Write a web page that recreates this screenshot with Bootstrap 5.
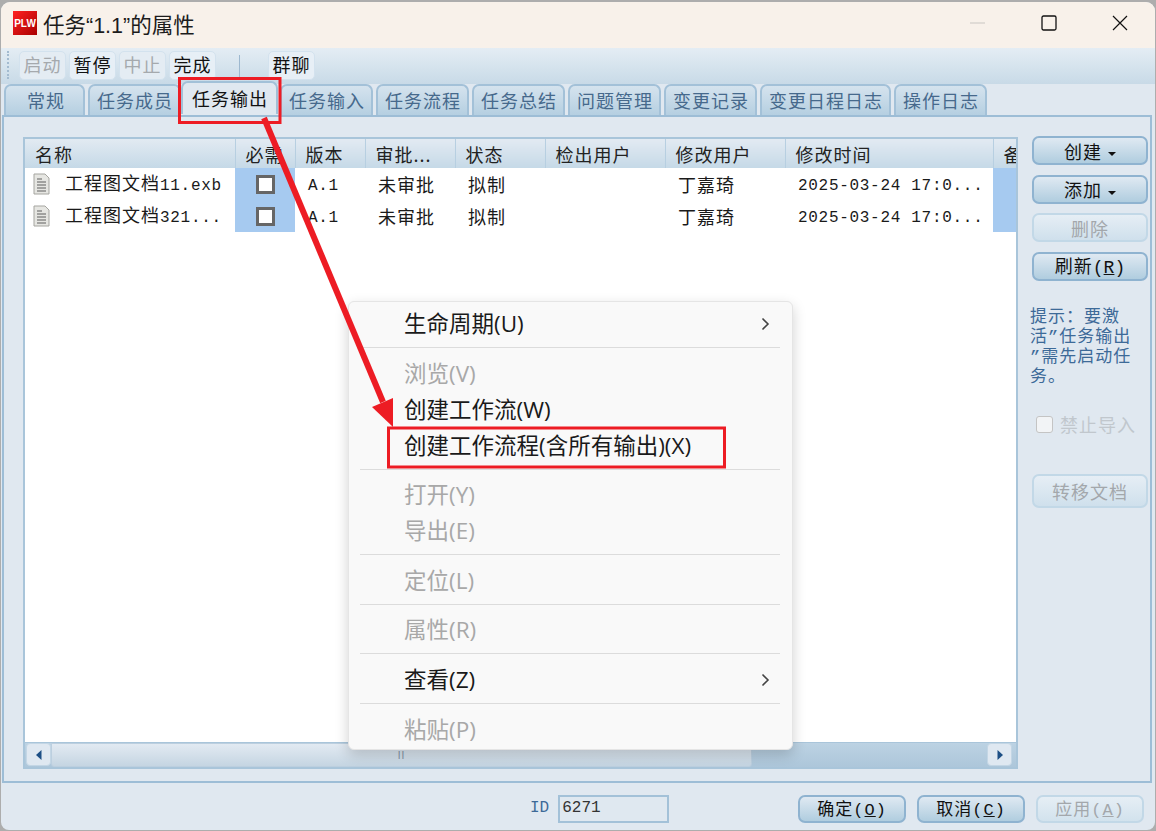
<!DOCTYPE html>
<html lang="zh"><head><meta charset="utf-8"><title>任务属性</title>
<link href="https://cdn.jsdelivr.net/npm/bootstrap@5.3.0/dist/css/bootstrap.min.css" rel="stylesheet">
<style>
:root{--ink:#1c1c1c;--blue:#9dbdd6;--pane:#e0e8f0;--tabtxt:#46698c}
html,body{height:831px;overflow:hidden}
body{background:#adadad;font-family:"Noto Sans CJK SC",sans-serif;color:var(--ink);position:relative}
.win{position:absolute;left:1px;top:2px;width:1154px;height:828px;background:var(--pane);border-radius:9px 9px 8px 8px;overflow:hidden}
.titlebar{height:46px;background:#f8f1ea;padding:0 0 4px 12px;font:21.5px "Liberation Sans","Noto Sans CJK SC",sans-serif}
.logo{width:24px;height:24px;background:linear-gradient(135deg,#f22,#a00);color:#fff;font:bold 10px "Liberation Sans",sans-serif;margin-right:6px}
.wbtn{width:71px;height:42px}
.tools{height:36px;background:linear-gradient(#e4edf4,#c8dae7);padding:3px 0 0 6px}
.grip{width:3px;height:28px;border-left:2px dotted #a3bbd0;margin-right:9px}
.tbtn{width:47px;height:29px;padding:0 0 3px;margin-right:3px;border:1px solid #d3e2ee;border-radius:5px;background:#e7eff6;color:#111;font-size:18px;letter-spacing:1px;line-height:1}
.tbtn:disabled{background:#e4ecf3;color:#a5a9ad;border-color:#d3e2ee;opacity:1}
.tsep{width:1px;height:22px;background:#9db8cf;margin:0 28px 0 20px}
.tabstrip{height:31px;padding-left:3px;border:0;gap:3px;flex-wrap:nowrap;position:relative;z-index:1}
.tabstrip .nav-link{height:31px;margin:0;padding:2px 6px 0 7px;color:var(--tabtxt);font-size:18px;letter-spacing:1px;line-height:24px;white-space:nowrap;border:2px solid #a3c1d8;border-bottom:0;border-radius:7px 7px 0 0;background:linear-gradient(#d5e3ee,#b5cfe1)}
.tabstrip .nav-link.wide{padding:2px 18px 0 21px}
.tabstrip .nav-link.active{color:#111;background:var(--pane);border-color:#a3c1d8;height:33px;margin:-3px -1px -1px -3px;padding:3px 7px 0 9px;width:97px}
.panel{height:668px;margin:0 0 0 1px;border:2px solid var(--blue);width:1150px;background:var(--pane);padding:20px 3px 0 19px;column-gap:14px}
.grid{width:995px;height:632px;border:2px solid #a9c5da;background:#fff;overflow:hidden;flex-shrink:0}
.gridtable{table-layout:fixed;width:993px;margin:0;--bs-table-bg:transparent;border-collapse:collapse}
.c1{width:210px}.c2{width:60px}.c3{width:70px}.c4{width:90px}.c5{width:90px}.c6{width:120px}.c7{width:120px}.c8{width:208px}.c9{width:25px}
.gridtable th{height:29px;padding:0 0 0 10px;font-weight:400;font-size:18px;letter-spacing:1px;line-height:24px;color:#222;background:linear-gradient(#e2eaf2,#c5d9e7);border:0;border-right:1px solid #b7cfe1;white-space:nowrap;overflow:hidden;vertical-align:middle}
.gridtable td{height:32px;padding:0;border:0;font:16px/24px "Liberation Mono","Noto Sans CJK SC",monospace;letter-spacing:.7px;color:#1a1a1a;white-space:nowrap;overflow:hidden;vertical-align:middle}
.cn{font-family:"Noto Sans CJK SC",sans-serif!important;letter-spacing:1px!important;font-size:18px!important;line-height:24px}
.gridtable td.pick{background:#a6caf0}
.namecell{padding-left:8px!important}
.namecell svg{margin-right:15px;vertical-align:-5px}
.chk{display:block;width:19px;height:19px;margin:0 auto;border:3px solid #666;background:#fff}
.ind1{padding-left:13px!important}
.lat{padding-top:3px!important}
.gridfill{min-height:0}
.hbar{height:25px;background:linear-gradient(#bcd2e3,#adc6da);border-top:1px solid #a9c5da}
.sbtn{width:25px;height:23px;padding:0;margin:0 0 0 1px;border:1px solid #c3d6e5;border-radius:4px;background:#dfe8f1;line-height:1}
.thumb{width:701px;height:24px;background:linear-gradient(#e2eaf2,#c5d5e2);border:1px solid #bccfdf;border-radius:0 3px 3px 3px;color:#7d8f9f;font:10px "Liberation Sans",sans-serif;letter-spacing:1px}
.side{width:116px;margin-top:-1px;flex-shrink:0}
.sbutton{width:116px;height:29px;padding:0;margin-bottom:9.5px;border:2px solid #8fb3d0;border-radius:7px;background:linear-gradient(#dfe9f2,#b0cddf);color:#111;font-size:18px;letter-spacing:1px;line-height:1}
.sbutton:disabled{background:linear-gradient(#e6eef5,#cfe0ec);border-color:#c2d8e7;color:#a3a7ab;opacity:1}
.sbutton.dropdown-toggle::after{margin-left:6px;vertical-align:.12em;border-width:.27em .27em 0;color:#111}
.sbutton .mono{font-family:"Liberation Mono",monospace;letter-spacing:0}
.fbtn .mono{font-family:"Liberation Mono",monospace}
.tip{margin:18px 0 0 -2px;width:112px;font:17px/20px "Liberation Mono","Noto Sans CJK SC",sans-serif;letter-spacing:1px;color:#3d6a98}
.sidecheck{margin:23px 0 0 4px;min-height:0;padding:0;font-size:18px;letter-spacing:1px;color:#a3a7ab}
.sidecheck .form-check-input{float:none;width:17px;height:17px;margin:0 7px 0 0;border-radius:3px;border:1px solid #c4c4c4;background-color:#f2f4f6;opacity:1}
.sidecheck .form-check-label{opacity:1}
.move{height:34px;margin-top:36px}
.foot{height:47px;padding:12px 0 0 0}
.idlabel{color:#3d6a98;font:16px "Liberation Mono",monospace;margin-left:529px;margin-right:9px}
.idbox{width:111px;height:28px;border:2px solid #a3c1d8;border-radius:0;background:#dfe8f0;padding:0 0 2px 2px;font:16px "Liberation Mono",monospace;color:#333;margin-right:129px}
.fbtn{width:109px;height:28px;padding:0;margin-right:11px;border:2px solid #8fb3d0;border-radius:7px;background:linear-gradient(#dfe9f2,#b0cddf);font-size:17px;line-height:1;color:#111;letter-spacing:1px}
.fbtn:disabled{background:linear-gradient(#e6eef5,#d2e2ed);border-color:#c2d8e7;color:#a3a7ab;opacity:1}
.ctxmenu{position:absolute;left:348px;top:301px;width:445px;height:449px;margin:0;padding:4px 0 0;background:#f9f9f9;border:1px solid #e5e5e5;border-radius:6px;box-shadow:0 5px 14px rgba(0,0,0,.18);z-index:5;display:block}
.ctxmenu .dropdown-item{height:36px;padding:0 22px 0 55px;font:22.5px/36px "Open Sans","Noto Sans CJK SC",sans-serif;color:#1a1a1a;background:transparent}
.ctxmenu .dropdown-item.disabled{color:#a8a8a8}
.ctxmenu li.rule{height:13.6px;padding:5px 12px 0 11px}
.ctxmenu .dropdown-divider{margin:0;border-top:1px solid #dcdcdc;opacity:1}
.over{position:absolute;left:0;top:0;z-index:6;pointer-events:none}
</style></head>
<body>
<div class="win d-flex flex-column">
  <div class="titlebar d-flex align-items-center">
    <span class="logo d-flex align-items-center justify-content-center">PLW</span>
    <span class="flex-grow-1">任务“1.1”的属性</span>
    <span class="wbtn d-flex align-items-center justify-content-center">
      <svg width="16" height="16"><line x1="0" y1="8" x2="15" y2="8" stroke="#c9c6c2"/></svg></span>
    <span class="wbtn d-flex align-items-center justify-content-center">
      <svg width="16" height="16"><rect x="1" y="1" width="14" height="14" rx="1.5" fill="none" stroke="#111" stroke-width="1.3"/></svg></span>
    <span class="wbtn d-flex align-items-center justify-content-center">
      <svg width="16" height="16"><path d="M1 1L15 15M15 1L1 15" stroke="#111" stroke-width="1.2"/></svg></span>
  </div>
  <div class="tools d-flex align-items-start">
    <span class="grip"></span>
    <button class="btn tbtn" disabled>启动</button>
    <button class="btn tbtn">暂停</button>
    <button class="btn tbtn" disabled>中止</button>
    <button class="btn tbtn">完成</button>
    <span class="tsep mt-1"></span>
    <button class="btn tbtn">群聊</button>
  </div>
  <ul class="nav nav-tabs tabstrip">
    <li class="nav-item"><a class="nav-link wide" href="#">常规</a></li>
    <li class="nav-item"><a class="nav-link" href="#">任务成员</a></li>
    <li class="nav-item"><a class="nav-link active" href="#">任务输出</a></li>
    <li class="nav-item"><a class="nav-link" href="#">任务输入</a></li>
    <li class="nav-item"><a class="nav-link" href="#">任务流程</a></li>
    <li class="nav-item"><a class="nav-link" href="#">任务总结</a></li>
    <li class="nav-item"><a class="nav-link" href="#">问题管理</a></li>
    <li class="nav-item"><a class="nav-link" href="#">变更记录</a></li>
    <li class="nav-item"><a class="nav-link" href="#">变更日程日志</a></li>
    <li class="nav-item"><a class="nav-link" href="#">操作日志</a></li>
  </ul>
  <div class="panel d-flex align-items-start">
    <div class="grid d-flex flex-column">
      <div class="gridfill flex-grow-1">
        <table class="table gridtable">
          <colgroup><col class="c1"><col class="c2"><col class="c3"><col class="c4"><col class="c5"><col class="c6"><col class="c7"><col class="c8"><col class="c9"></colgroup>
          <thead><tr><th>名称</th><th>必需</th><th>版本</th><th>审批...</th><th>状态</th><th>检出用户</th><th>修改用户</th><th>修改时间</th><th>备注</th></tr></thead>
          <tbody>
            <tr>
              <td class="namecell"><svg width="17" height="22" viewBox="0 0 17 22"><path d="M1 1H12L16 5V21H1Z" fill="#e6e6e2" stroke="#a5a5a0"/><path d="M4 6H9M4 9H13M4 12H13M4 15H13M4 18H13" stroke="#5f5f5f"/></svg><span class="cn">工程图文档</span>11.exb</td>
              <td class="pick"><span class="chk"></span></td>
              <td class="ind1 lat">A.1</td><td class="ind1 cn">未审批</td><td class="ind1 cn">拟制</td><td></td><td class="ind1 cn">丁嘉琦</td><td class="ind1 lat">2025-03-24 17:0...</td><td class="pick"></td>
            </tr>
            <tr>
              <td class="namecell"><svg width="17" height="22" viewBox="0 0 17 22"><path d="M1 1H12L16 5V21H1Z" fill="#e6e6e2" stroke="#a5a5a0"/><path d="M4 6H9M4 9H13M4 12H13M4 15H13M4 18H13" stroke="#5f5f5f"/></svg><span class="cn">工程图文档</span>321...</td>
              <td class="pick"><span class="chk"></span></td>
              <td class="ind1 lat">A.1</td><td class="ind1 cn">未审批</td><td class="ind1 cn">拟制</td><td></td><td class="ind1 cn">丁嘉琦</td><td class="ind1 lat">2025-03-24 17:0...</td><td class="pick"></td>
            </tr>
          </tbody>
        </table>
      </div>
      <div class="hbar d-flex">
        <button class="btn sbtn d-flex align-items-center justify-content-center"><svg width="6" height="10"><path d="M5.500 0V10L0 5Z" fill="#1d4f85"/></svg></button>
        <span class="thumb d-flex align-items-center justify-content-center">II</span>
        <span class="flex-grow-1"></span>
        <button class="btn sbtn me-1 d-flex align-items-center justify-content-center"><svg width="6" height="10"><path d="M.5 0V10L6 5Z" fill="#1d4f85"/></svg></button>
      </div>
    </div>
    <div class="side d-flex flex-column">
      <button class="btn sbutton dropdown-toggle">创建</button>
      <button class="btn sbutton dropdown-toggle">添加</button>
      <button class="btn sbutton" disabled>删除</button>
      <button class="btn sbutton">刷新<span class="mono">(<u>R</u>)</span></button>
      <div class="tip">提示：要激<br>活”任务输出<br>”需先启动任<br>务。</div>
      <div class="form-check sidecheck d-flex align-items-center">
        <input class="form-check-input" type="checkbox" disabled id="noimp">
        <label class="form-check-label" for="noimp">禁止导入</label>
      </div>
      <button class="btn sbutton move" disabled>转移文档</button>
    </div>
  </div>
  <div class="foot d-flex align-items-start">
    <span class="idlabel mt-1">ID</span>
    <input class="idbox" value="6271" readonly>
    <button class="btn fbtn">确定<span class="mono">(<u>O</u>)</span></button>
    <button class="btn fbtn">取消<span class="mono">(<u>C</u>)</span></button>
    <button class="btn fbtn" disabled>应用<span class="mono">(<u>A</u>)</span></button>
  </div>
</div>

<ul class="dropdown-menu ctxmenu list-unstyled">
  <li><a class="dropdown-item d-flex justify-content-between align-items-center" href="#">生命周期(U)<svg width="9" height="14"><path d="M1.5 1.5L7 7L1.5 12.5" fill="none" stroke="#444" stroke-width="1.6"/></svg></a></li>
  <li class="rule"><hr class="dropdown-divider"></li>
  <li><a class="dropdown-item disabled" href="#">浏览(V)</a></li>
  <li><a class="dropdown-item" href="#">创建工作流(W)</a></li>
  <li><a class="dropdown-item" href="#">创建工作流程(含所有输出)(X)</a></li>
  <li class="rule"><hr class="dropdown-divider"></li>
  <li><a class="dropdown-item disabled" href="#">打开(Y)</a></li>
  <li><a class="dropdown-item disabled" href="#">导出(E)</a></li>
  <li class="rule"><hr class="dropdown-divider"></li>
  <li><a class="dropdown-item disabled" href="#">定位(L)</a></li>
  <li class="rule"><hr class="dropdown-divider"></li>
  <li><a class="dropdown-item disabled" href="#">属性(R)</a></li>
  <li class="rule"><hr class="dropdown-divider"></li>
  <li><a class="dropdown-item d-flex justify-content-between align-items-center" href="#">查看(Z)<svg width="9" height="14"><path d="M1.5 1.5L7 7L1.5 12.5" fill="none" stroke="#444" stroke-width="1.6"/></svg></a></li>
  <li class="rule"><hr class="dropdown-divider"></li>
  <li><a class="dropdown-item disabled" href="#">粘贴(P)</a></li>
</ul>

<svg class="over" width="1156" height="831" viewBox="0 0 1156 831">
  <rect x="179.5" y="78.5" width="100.500" height="44" fill="none" stroke="#ed1c24" stroke-width="3"/>
  <rect x="388.500" y="428" width="336" height="39" fill="none" stroke="#ed1c24" stroke-width="3"/>
  <path d="M264 118L383 402" stroke="#ed1c24" stroke-width="6" fill="none"/>
  <path d="M393 427L372 407L393 398Z" fill="#ed1c24"/>
</svg>
</body></html>
